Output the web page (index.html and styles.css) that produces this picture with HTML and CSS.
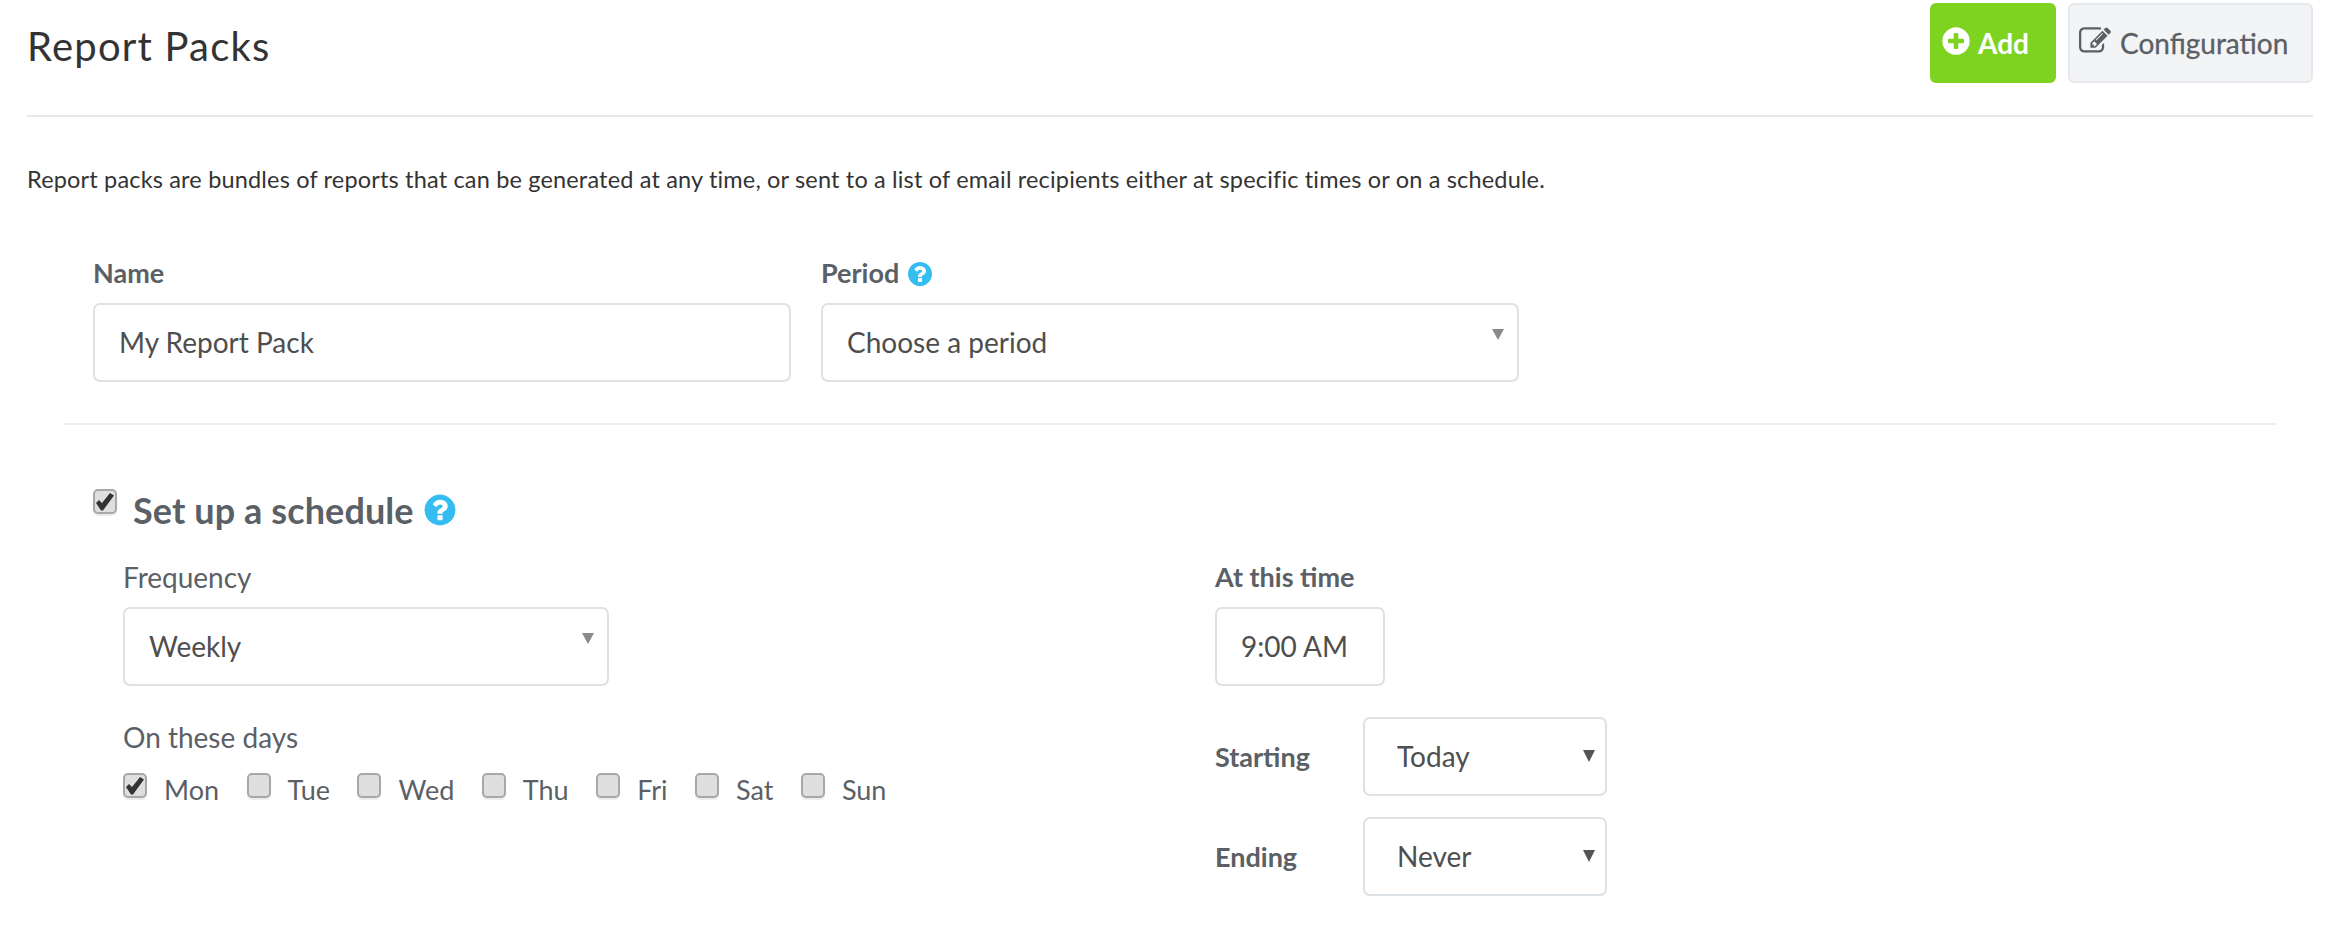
FILE: index.html
```html
<!doctype html>
<html lang="en">
  <head>
    <meta charset="utf-8" />
    <title>Report Packs</title>
    <link rel="stylesheet" href="styles.css">
  </head>

  <body>
    <svg class="icon-defs" width="0" height="0">
      <symbol id="i-plus" viewBox="0 0 1792 1792"><path d="M1344 960v-128q0-26-19-45t-45-19h-256v-256q0-26-19-45t-45-19h-128q-26 0-45 19t-19 45v256h-256q-26 0-45 19t-19 45v128q0 26 19 45t45 19h256v256q0 26 19 45t45 19h128q26 0 45-19t19-45v-256h256q26 0 45-19t19-45zm320-64q0 209-103 385.5t-279.5 279.5-385.5 103-385.5-103-279.5-279.5-103-385.5 103-385.5 279.5-279.5 385.5-103 385.5 103 279.5 279.5 103 385.5z"/></symbol>
      <symbol id="i-edit" viewBox="0 0 1792 1792"><path d="M888 1184l116-116-152-152-116 116v56h96v96h56zm440-720q-16-16-33 1l-350 350q-17 17-1 33t33-1l350-350q17-17 1-33zm80 594v190q0 119-84.5 203.5t-203.5 84.5h-832q-119 0-203.5-84.5t-84.5-203.5v-832q0-119 84.5-203.5t203.5-84.5h832q63 0 117 25 15 7 18 23 3 17-9 29l-49 49q-14 14-32 8-23-6-45-6h-832q-66 0-113 47t-47 113v832q0 66 47 113t113 47h832q66 0 113-47t47-113v-126q0-13 9-22l64-64q15-15 35-7t20 29zm-96-738l288 288-672 672h-288v-288zm444 132l-92 92-288-288 92-92q28-28 68-28t68 28l152 152q28 28 28 68t-28 68z"/></symbol>
      <symbol id="i-help" viewBox="0 0 1792 1792"><path d="M1024 1376v-192q0-14-9-23t-23-9h-192q-14 0-23 9t-9 23v192q0 14 9 23t23 9h192q14 0 23-9t9-23zm256-672q0-88-55.5-163t-138.5-116-170-41q-243 0-371 213-15 24 8 42l132 100q7 6 19 6 16 0 25-12 53-68 86-92 34-24 86-24 48 0 85.5 26t37.5 59q0 38-20 61t-68 45q-63 28-115.5 86.5t-52.5 125.5v36q0 14 9 23t23 9h192q14 0 23-9t9-23q0-19 21.5-49.5t54.5-49.5q32-18 49-28.5t46-35 44.5-48 28-60.5 12.5-81zm384 192q0 209-103 385.5t-279.5 279.5-385.5 103-385.5-103-279.5-279.5-103-385.5 103-385.5 279.5-279.5 385.5-103 385.5 103 279.5 279.5 103 385.5z"/></symbol>
      <symbol id="i-check" viewBox="0 0 20 21"><path d="M1 12l3-3 3 3 8-10 4 2.500-11 15h-2z"/></symbol>
    </svg>

    <div class="page">
      <header class="page-header">
        <h1 class="page-title">Report Packs</h1>
        <div class="header-buttons">
          <a class="btn btn-add"><svg class="btn-icon"><use href="#i-plus"/></svg>Add</a>
          <a class="btn btn-config"><svg class="btn-icon"><use href="#i-edit"/></svg>Configuration</a>
        </div>
      </header>

      <p class="intro">Report packs are bundles of reports that can be generated at any time, or sent to a list of email recipients either at specific times or on a schedule.</p>

      <div class="name-row">
        <div class="field">
          <label class="label-strong">Name</label>
          <div class="control">My Report Pack</div>
        </div>
        <div class="field">
          <label class="label-strong">Period <svg class="help help-small"><use href="#i-help"/></svg></label>
          <div class="control control-select arrow-light">Choose a period</div>
        </div>
      </div>

      <hr class="divider">

      <section class="schedule">
        <div class="schedule-head">
          <span class="box box-large is-checked"><svg><use href="#i-check"/></svg></span>
          <h2 class="schedule-title">Set up a schedule</h2>
          <svg class="help help-large"><use href="#i-help"/></svg>
        </div>

        <div class="schedule-body">
          <div class="schedule-left">
            <label class="label-plain">Frequency</label>
            <div class="control control-select arrow-light control-frequency">Weekly</div>
            <label class="label-plain label-days">On these days</label>
            <div class="days">
              <span class="day"><span class="box is-checked"><svg><use href="#i-check"/></svg></span>Mon</span>
              <span class="day"><span class="box"></span>Tue</span>
              <span class="day"><span class="box"></span>Wed</span>
              <span class="day"><span class="box"></span>Thu</span>
              <span class="day"><span class="box"></span>Fri</span>
              <span class="day"><span class="box"></span>Sat</span>
              <span class="day"><span class="box"></span>Sun</span>
            </div>
          </div>

          <div class="schedule-right">
            <label class="label-strong">At this time</label>
            <div class="control control-time">9:00 AM</div>
            <div class="inline-field inline-first">
              <label class="label-strong">Starting</label>
              <div class="control control-select arrow-dark control-range">Today</div>
            </div>
            <div class="inline-field">
              <label class="label-strong">Ending</label>
              <div class="control control-select arrow-dark control-range">Never</div>
            </div>
          </div>
        </div>
      </section>
    </div>
  </body>
</html>
```

FILE: styles.css
```css
html,
body {
  background: #fff;
  margin: 0;
  padding: 0;
  font-family: Lato, "Open Sans", sans-serif;
  color: #5b5f66;
}
.icon-defs {
  display: block;
  height: 0;
}
.page {
  padding: 3px 19px 0 27px;
}

/* header */
.page-header {
  display: flex;
  justify-content: space-between;
  height: 112px;
  border-bottom: 2px solid #e6e6e6;
}
.page-title {
  margin: 19px 0 0;
  font-size: 40px;
  line-height: 48px;
  font-weight: 400;
  letter-spacing: 1.2px;
  color: #333;
}
.header-buttons {
  display: flex;
  gap: 12px;
  height: 80px;
}
.btn {
  display: flex;
  align-items: center;
  box-sizing: border-box;
  border-radius: 6px;
  font-size: 28px;
}
.btn-add {
  width: 126px;
  padding-left: 10px;
  gap: 6px;
  background: #7ed321;
  color: #fff;
  font-weight: 700;
  fill: #fff;
}
.btn-config {
  width: 245px;
  padding-left: 9px;
  gap: 9px;
  background: #f3f4f6;
  border: 2px solid #e5e8ec;
  color: #5b5f66;
  fill: #5b5f66;
  -webkit-text-stroke: 0.3px #5b5f66;
}
.btn-icon {
  width: 32px;
  height: 32px;
  margin-top: -4px;
}

.intro {
  margin: 49px 0 0;
  font-size: 23.5px;
  line-height: 26px;
  letter-spacing: 0.17px;
  color: #333;
}

/* fields */
.name-row {
  display: flex;
  gap: 30px;
  margin: 66px 0 0 66px;
}
.field {
  width: 698px;
}
.label-strong {
  display: block;
  font-size: 27px;
  line-height: 30px;
  font-weight: 700;
  color: #5b5f66;
}
.label-plain {
  display: block;
  font-size: 28px;
  line-height: 30px;
  color: #5b5f66;
}
.control {
  position: relative;
  box-sizing: border-box;
  height: 79px;
  margin-top: 15px;
  padding: 0 24px;
  border: 2px solid #dde2e6;
  border-radius: 7px;
  font-size: 28px;
  line-height: 75px;
  color: #4e4e4e;
  background: #fff;
}
.control-select::after {
  content: "";
  position: absolute;
  border-left: 6px solid transparent;
  border-right: 6px solid transparent;
}
.arrow-light::after {
  top: 24px;
  right: 13px;
  border-top: 11px solid #8a8a8a;
}
.arrow-dark::after {
  top: 31px;
  right: 10px;
  border-top: 12px solid #555;
}
.help {
  fill: #35bdf2;
  vertical-align: middle;
}
.help-small {
  width: 28px;
  height: 28px;
  margin-top: -4px;
}
.help-large {
  width: 36px;
  height: 36px;
}

hr.divider {
  margin: 41px 36px 0 36px;
  border: 0;
  border-top: 2px solid #eee;
}

/* schedule */
.schedule {
  margin: 0 0 0 66px;
}
.schedule-head {
  display: flex;
  align-items: center;
  height: 60px;
  margin-top: 55px;
}
.schedule-title {
  margin: 0 8px 0 16px;
  font-size: 36px;
  font-weight: 700;
  letter-spacing: 0.1px;
  color: #5b5f66;
}
.box {
  display: inline-flex;
  flex: none;
  box-sizing: border-box;
  width: 24px;
  height: 25px;
  border: 2px solid #a8a8a8;
  border-radius: 5px;
  background: #dfdfdf;
  box-shadow: 0 2px 1px #ececec;
  fill: #333;
}
.box svg {
  width: 20px;
  height: 21px;
}
.box-large {
  margin-top: -17px;
}
.schedule-body {
  display: flex;
  margin-top: 22px;
}
.schedule-left {
  width: 1122px;
  padding-left: 30px;
  box-sizing: border-box;
}
.control-frequency {
  width: 486px;
}
.label-days {
  margin-top: 36px;
}
.days {
  display: flex;
  gap: 27.5px;
  margin-top: 21px;
}
.day {
  display: flex;
  gap: 17px;
  font-size: 27px;
  line-height: 34px;
}
.control-time {
  width: 170px;
}
.inline-field {
  display: flex;
  align-items: center;
  margin-top: 21px;
}
.inline-first {
  margin-top: 31px;
}
.inline-field .label-strong {
  width: 148px;
}
.control-range {
  width: 244px;
  margin-top: 0;
  padding-left: 32px;
}
```
